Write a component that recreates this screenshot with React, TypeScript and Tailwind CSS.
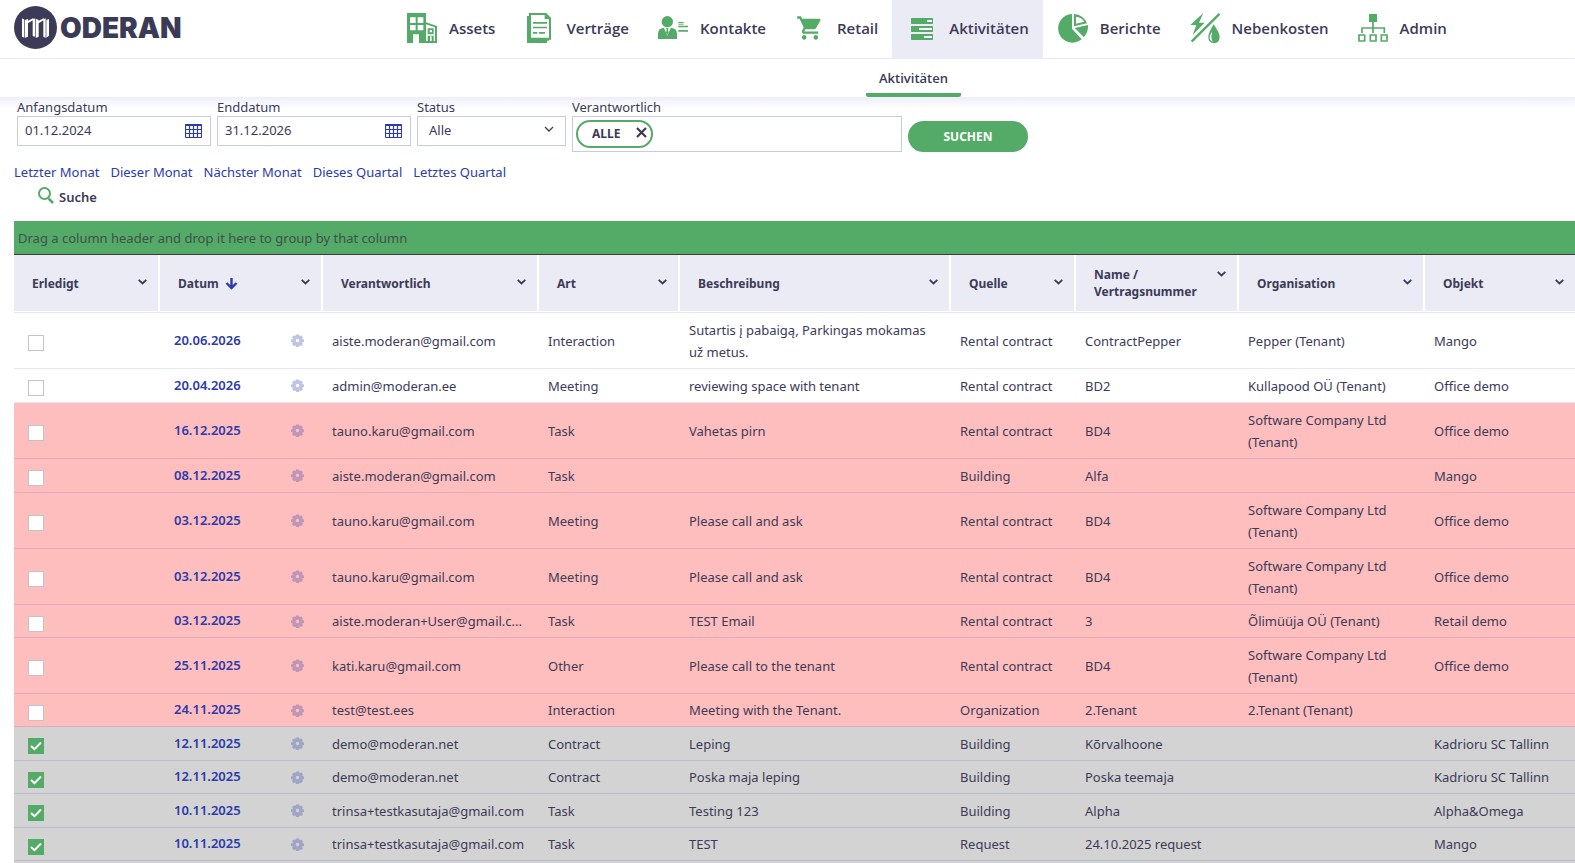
import React from "react";
import clsx from "clsx";
import { MdShoppingCart } from "react-icons/md";

const Logo = () => (
  <a href="#" className="flex items-center gap-[3px]" aria-label="Moderan">
    <svg width="43" height="43" viewBox="0 0 129 129">
      <circle cx="64.5" cy="64.5" r="64.5" fill="#3b3b58" />
      <path
        fill="#fff"
        d="M24 37l7 4v54l-7-3zM33 42l9-3v53l-9 3zM42 44l15-7 4 3-19 12zM56 41l7-4v55l-7-2zM65 38l9 4v50l-9 4zM74 44l15-7 4 3-19 12zM88 41l7-4v59l-7-4zM97 42l8-3v50l-8 6z"
      />
    </svg>
    <span className="font-[Inter,sans-serif] text-[28px] leading-8 font-black text-[#3b3b58]">ODERAN</span>
  </a>
);

const AssetsIcon = () => (
  <svg width="30" height="30" viewBox="0 0 90 90" fill="#54aa67">
    <path
      fillRule="evenodd"
      d="M0 0h57v28l33 11v51H57V36v54H36V64H18v26H0zM9 13v17h17V13zM32 13v17h17V13zM9 36v16h17V36zM32 36v16h17V36z"
    />
    <path d="M57 34l27 9v41H57z" fill="#fff" />
    <path
      fillRule="evenodd"
      d="M62 46h18v18H62zM68 51v7h7v-7zM62 68h18v18H62zM69 70v16h5V70z"
    />
  </svg>
);

const ContractsIcon = () => (
  <svg width="30" height="30" viewBox="-9 0 90 90" fill="#54aa67">
    <path d="M6 0h52l14 15v65h-6v3h-6v7H0V9h6z" />
    <path d="M12 6h41v12h13v56H12z" fill="#fff" />
    <path d="M18 27h42v5H18zM18 41h42v5H18zM18 57h13v5H18zM36 57h18v5H36z" />
  </svg>
);

const ContactsIcon = () => (
  <svg width="30" height="30" viewBox="0 0 90 90">
    <g fill="#54aa67">
      <circle cx="28" cy="26" r="17" />
      <path d="M0 78V62q0-16 17-18h22q18 2 18 18v16z" />
    </g>
    <path d="M17 43h22L28 68z" fill="#fff" />
    <path d="M24 45h8l-2 5 2 9-4 7-4-7 2-9z" fill="#54aa67" />
    <path d="M61 27h16v4H61zM61 38h29v5H61zM61 51h29v5H61z" fill="#54aa67" />
    <path d="M61 33h16v2H61z" fill="#54aa67" />
  </svg>
);

const ActivitiesIcon = () => (
  <svg width="30" height="30" viewBox="0 0 90 90" fill="#54aa67">
    <rect x="12" y="15" width="66" height="18" rx="2" />
    <rect x="12" y="39" width="66" height="18" rx="2" />
    <rect x="12" y="63" width="66" height="18" rx="2" />
    <path d="M60 21h15v6H60zM36 45h39v6H36zM51 69h24v6H51z" fill="#fff" />
  </svg>
);

const ReportsIcon = () => (
  <svg width="30" height="30" viewBox="0 0 90 90" fill="#54aa67">
    <path d="M42 3v44l29 32A43 43 0 1 1 42 3z" />
    <path fillRule="evenodd" d="M48 3a43 43 0 0 1 39 28L48 40zM54 11v21l25-6Q70 12 54 11z" />
    <path d="M50 45l40-9q1 22-13 36z" />
  </svg>
);

const UtilitiesIcon = () => (
  <svg width="30" height="30" viewBox="0 0 90 90" fill="#54aa67">
    <path d="M40 0L1 36h18L8 66l36-37H27z" />
    <path d="M86 0l5 5L8 88l-6-5z" />
    <path fillRule="evenodd" d="M71 34q18 26 18 38 0 18-17 18T55 72q0-12 16-38zM67 55q-8 12-8 18 0 10 9 13-4-7-4-16z" />
  </svg>
);

const AdminIcon = () => (
  <svg width="30" height="30" viewBox="0 0 90 90" fill="none" stroke="#54aa67" strokeWidth="5">
    <path d="M33 3h24v24H33z" fill="#54aa67" stroke="none" />
    <path d="M45 27v33M12 60V45h67v15" />
    <path d="M3 66h17v18H3zM37 66h17v18H37zM70 66h17v18H70z" />
  </svg>
);

const menu = [
  { label: "Assets", icon: <AssetsIcon /> },
  { label: "Verträge", icon: <ContractsIcon /> },
  { label: "Kontakte", icon: <ContactsIcon /> },
  { label: "Retail", icon: <MdShoppingCart size={28} color="#54aa67" /> },
  { label: "Aktivitäten", icon: <ActivitiesIcon />, active: true },
  { label: "Berichte", icon: <ReportsIcon /> },
  { label: "Nebenkosten", icon: <UtilitiesIcon /> },
  { label: "Admin", icon: <AdminIcon /> },
];

const Chevron = () => (
  <svg width="9" height="6" viewBox="0 0 9 6" fill="none" stroke="currentColor" strokeWidth="1.8">
    <path d="M0.7 0.8l3.8 3.7 3.8-3.7" />
  </svg>
);

const CalendarIcon = () => (
  <svg width="17" height="14" viewBox="0 0 17 14" fill="none" stroke="#2b3baa">
    <rect x="0.5" y="0.5" width="16" height="13" rx="1" strokeWidth="1.2" />
    <path d="M0.5 1h16" strokeWidth="2" />
    <path d="M0.5 5.5h16M0.5 9.5h16M4.5 1v12.500M8.500 1v12.500M12.500 1v12.500" strokeWidth="1.2" />
  </svg>
);

const Gear = () => (
  <svg width="13" height="13" viewBox="0 0 26 26">
    <path
      fill="#2b3baa"
      fillOpacity="0.3"
      fillRule="evenodd"
      d="M10 1h6l1 3 4-1 3 4-2 3 4 1v5l-4 1 2 4-4 3-3-1-1 3h-6l-1-3-4 1-3-4 2-3-4-1v-5l4-1-2-4 4-3 3 1zM13 9.500a3.500 3.500 0 1 0 0 7 3.500 3.500 0 1 0 0-7z"
    />
  </svg>
);

const columns = [
  { name: "Erledigt", width: "w-[146px]" },
  { name: "Datum", width: "w-[163px]", sorted: true },
  { name: "Verantwortlich", width: "w-[216px]" },
  { name: "Art", width: "w-[141px]" },
  { name: "Beschreibung", width: "w-[271px]" },
  { name: "Quelle", width: "w-[125px]" },
  { name: "Name / Vertragsnummer", width: "w-[163px]", tall: true },
  { name: "Organisation", width: "w-[186px]" },
  { name: "Objekt", width: "w-auto" },
];

const rows = [
  { date: "20.06.2026", cells: ["aiste.moderan@gmail.com", "Interaction", "Sutartis į pabaigą, Parkingas mokamas už metus.", "Rental contract", "ContractPepper", "Pepper (Tenant)", "Mango"], state: "open", tall: true },
  { date: "20.04.2026", cells: ["admin@moderan.ee", "Meeting", "reviewing space with tenant", "Rental contract", "BD2", "Kullapood OÜ (Tenant)", "Office demo"], state: "open" },
  { date: "16.12.2025", cells: ["tauno.karu@gmail.com", "Task", "Vahetas pirn", "Rental contract", "BD4", "Software Company Ltd (Tenant)", "Office demo"], state: "late", tall: true },
  { date: "08.12.2025", cells: ["aiste.moderan@gmail.com", "Task", "", "Building", "Alfa", "", "Mango"], state: "late" },
  { date: "03.12.2025", cells: ["tauno.karu@gmail.com", "Meeting", "Please call and ask", "Rental contract", "BD4", "Software Company Ltd (Tenant)", "Office demo"], state: "late", tall: true },
  { date: "03.12.2025", cells: ["tauno.karu@gmail.com", "Meeting", "Please call and ask", "Rental contract", "BD4", "Software Company Ltd (Tenant)", "Office demo"], state: "late", tall: true },
  { date: "03.12.2025", cells: ["aiste.moderan+User@gmail.c...", "Task", "TEST Email", "Rental contract", "3", "Õlimüüja OÜ (Tenant)", "Retail demo"], state: "late" },
  { date: "25.11.2025", cells: ["kati.karu@gmail.com", "Other", "Please call to the tenant", "Rental contract", "BD4", "Software Company Ltd (Tenant)", "Office demo"], state: "late", tall: true },
  { date: "24.11.2025", cells: ["test@test.ees", "Interaction", "Meeting with the Tenant.", "Organization", "2.Tenant", "2.Tenant (Tenant)", ""], state: "late" },
  { date: "12.11.2025", cells: ["demo@moderan.net", "Contract", "Leping", "Building", "Kõrvalhoone", "", "Kadrioru SC Tallinn"], state: "done" },
  { date: "12.11.2025", cells: ["demo@moderan.net", "Contract", "Poska maja leping", "Building", "Poska teemaja", "", "Kadrioru SC Tallinn"], state: "done" },
  { date: "10.11.2025", cells: ["trinsa+testkasutaja@gmail.com", "Task", "Testing 123", "Building", "Alpha", "", "Alpha&Omega"], state: "done" },
  { date: "10.11.2025", cells: ["trinsa+testkasutaja@gmail.com", "Task", "TEST", "Request", "24.10.2025 request", "", "Mango"], state: "done" },
];

const DateField = ({ id, label, value }: { id: string; label: string; value: string }) => (
  <div className="w-[194px]">
    <label htmlFor={id} className="block leading-[18px]">
      {label}
    </label>
    <div className="flex h-[30px] items-center border border-[#c5cae9] pr-2">
      <input id={id} type="text" defaultValue={value} className="w-full min-w-0 pl-[7px] outline-none" />
      <button type="button" aria-label={label + " Kalender"}>
        <CalendarIcon />
      </button>
    </div>
  </div>
);

const Filters = () => (
  <form className="flex items-start gap-[6px] pl-[17px]" onSubmit={(e) => e.preventDefault()}>
    <DateField id="from" label="Anfangsdatum" value="01.12.2024" />
    <DateField id="to" label="Enddatum" value="31.12.2026" />
    <div className="w-[149px]">
      <label htmlFor="status" className="block leading-[18px]">
        Status
      </label>
      <div className="relative">
        <select id="status" className="h-[30px] w-full appearance-none border border-[#c5cae9] bg-white pl-[11px] outline-none">
          <option>Alle</option>
        </select>
        <svg className="pointer-events-none absolute top-[10px] right-3" width="10" height="7" viewBox="0 0 10 7" fill="none" stroke="#3b3b58" strokeWidth="1.3">
          <path d="M1 1l4 4 4-4" />
        </svg>
      </div>
    </div>
    <div className="w-[330px]">
      <label htmlFor="owner" className="block leading-[18px]">
        Verantwortlich
      </label>
      <div className="flex h-9 items-center gap-2 border border-[#c5cae9] px-[3px]">
        <span className="flex h-7 items-center gap-4 rounded-full border-2 border-[#54aa67] pr-1 pl-[14px] text-xs font-bold">
          ALLE
          <button type="button" aria-label="ALLE entfernen" className="pb-1">
            <svg width="11" height="11" viewBox="0 0 11 11" stroke="#3b3b58" strokeWidth="2.2">
              <path d="M1 1l9 9M10 1l-9 9" />
            </svg>
          </button>
        </span>
        <input id="owner" type="text" className="min-w-0 flex-1 outline-none" />
      </div>
    </div>
    <button type="submit" className="mt-[23px] h-[31px] w-[120px] rounded-full bg-[#54aa67] text-xs font-bold text-white">
      SUCHEN
    </button>
  </form>
);

const App = () => {
  return (
    <div className="overflow-x-hidden bg-white font-['Noto_Sans',sans-serif] text-[13px] text-[#3b3b58]">
      <header className="font-['Open_Sans',sans-serif]">
        <div className="flex border-b border-[#e8e8f6]">
          <div className="w-[392px] shrink-0 pt-[6px] pl-[14px]">
            <Logo />
          </div>
          <nav className="flex h-[58px]">
            {menu.map((item) => (
              <a
                key={item.label}
                href="#"
                className={clsx("flex items-center gap-3 pr-[14px] pb-[2px] pl-[15px] text-[15px] font-semibold", item.active && "bg-[#ebebf5]")}
              >
                <span className="flex w-[30px] justify-center">{item.icon}</span>
                {item.label}
              </a>
            ))}
          </nav>
        </div>
        <div className="flex h-[38px] pl-[866px]">
          <a href="#" className="flex w-[95px] items-center justify-center rounded-b-xs border-b-4 border-[#54aa67] pt-[5px] font-semibold">
            Aktivitäten
          </a>
        </div>
      </header>

      <main className="bg-linear-to-b from-[#eeeefb] to-white to-[12px] pt-px">
        <Filters />
        <div className="mt-[10px] flex gap-[11px] pl-[14px] leading-5 text-[#2b3baa]">
          <a href="#">Letzter Monat</a>
          <a href="#">Dieser Monat</a>
          <a href="#">Nächster Monat</a>
          <a href="#">Dieses Quartal</a>
          <a href="#">Letztes Quartal</a>
        </div>
        <button type="button" className="mt-[5px] flex gap-1 pl-[37px] leading-5 font-semibold">
          <svg width="18" height="18" viewBox="0 0 18 18" fill="none" stroke="#54aa67" strokeWidth="2">
            <circle cx="7.500" cy="6.500" r="5.500" />
            <path d="M11.500 11.500l4.500 4.500" strokeWidth="2.500" />
          </svg>
          Suche
        </button>

        <div className="mt-[14px] ml-[14px]">
          <p className="h-[34px] border-b border-[#3b3b3b] bg-[#54aa67] pl-1 leading-[34px] text-[#40504a]">
            Drag a column header and drop it here to group by that column
          </p>
          <table className="w-full table-fixed border-separate border-spacing-0">
            <thead>
              <tr>
                {columns.map((col) => (
                  <th key={col.name} className={clsx("group border-b border-[#e6e6f4] p-0 pb-px text-left", col.width)}>
                    <div className="flex h-14 items-center border-r-2 border-white bg-[#ebebf5] group-last:border-r-0">
                      <div className={clsx("flex w-full justify-between pr-[11px] pl-[18px] text-xs leading-[17px]", col.tall ? "items-start" : "items-center")}>
                        <span className="flex items-center gap-1.5">
                          {col.name}
                          {col.sorted && (
                            <svg width="13" height="13" viewBox="0 0 13 13" fill="none" stroke="#2b3baa" strokeWidth="2.4">
                              <path d="M6.500 1v10M1.500 6l5 5 5-5" />
                            </svg>
                          )}
                        </span>
                        <button type="button" aria-label={"Filter " + col.name} className={clsx("flex", col.tall ? "pt-[5px]" : "pb-[2px]")}>
                          <Chevron />
                        </button>
                      </div>
                    </div>
                  </th>
                ))}
              </tr>
            </thead>
            <tbody>
              {rows.map((row, i) => (
                <tr
                  key={i}
                  className={clsx(
                    "[&>td]:border-b",
                    row.tall ? "h-14" : "h-[33px] even:h-[34px]",
                    row.state === "open" && "[&>td]:border-[#e6e6f4]",
                    row.state === "late" && "bg-[#ffbebe] [&>td]:border-[#dfaabb]",
                    row.state === "done" && "bg-[#d3d3d3] [&>td]:border-[#b9bccf]"
                  )}
                >
                  <td className="p-0 pl-[14px]">
                    <label className="relative mt-[5px] block size-4">
                      <input
                        type="checkbox"
                        aria-label={"Erledigt " + row.date}
                        defaultChecked={row.state === "done"}
                        className="peer block size-4 appearance-none border border-[#c4c4c4] bg-white checked:border-[#54aa67] checked:bg-[#54aa67]"
                      />
                      <svg className="pointer-events-none absolute inset-0 hidden peer-checked:block" width="16" height="16" viewBox="0 0 16 16" fill="none" stroke="#fff" strokeWidth="2">
                        <path d="M3 8l3.500 3.200L13 4.500" />
                      </svg>
                    </label>
                  </td>
                  <td className="p-0 pr-[19px] pl-[14px]">
                    <div className="flex items-center justify-between">
                      <a href="#" className="font-semibold text-[#2b3baa]">
                        {row.date}
                      </a>
                      <button type="button" aria-label="Einstellungen">
                        <Gear />
                      </button>
                    </div>
                  </td>
                  {row.cells.map((cell, c) => (
                    <td key={c} className="p-0 py-[5px] pr-2 pl-[9px] leading-[22px] last:whitespace-nowrap nth-3:pr-0 nth-3:whitespace-nowrap">
                      {cell}
                    </td>
                  ))}
                </tr>
              ))}
              <tr>
                <td colSpan={9} className="h-[2px] bg-[#d3d3d3] p-0" />
              </tr>
            </tbody>
          </table>
        </div>
      </main>
    </div>
  );
};

export default App;
